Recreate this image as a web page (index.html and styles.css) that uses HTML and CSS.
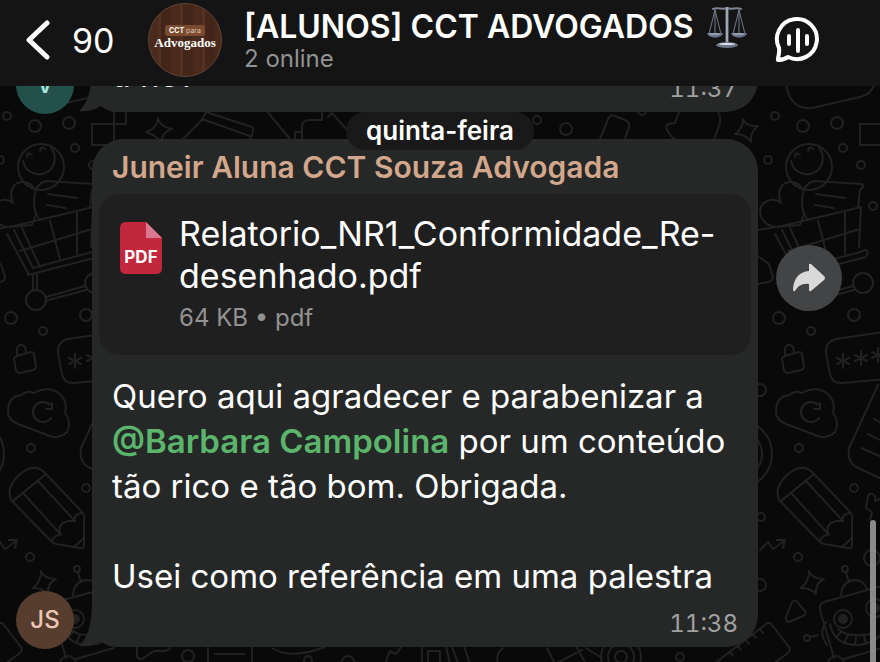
FILE: index.html
```html
<!DOCTYPE html>
<html lang="pt-BR">
<head>
    <meta charset="utf-8">
    <meta name="viewport" content="width=device-width, initial-scale=1">
    <title>[ALUNOS] CCT ADVOGADOS</title>
    <link rel="stylesheet" href="styles.css">
</head>
<body>
    <header class="topbar">
        <a class="back" href="#">
            <svg width="24" height="40" viewBox="0 0 24 40" aria-hidden="true"><path d="M21 3 L3 20 L21 37" fill="none" stroke="#fff" stroke-width="5" stroke-linecap="round" stroke-linejoin="round"/></svg>
            <span>90</span>
        </a>
        <div class="group-photo">
            <span class="photo-tag"><b>CCT</b> para</span>
            <span class="photo-name">Advogados</span>
        </div>
        <div class="group-info">
            <h1>
                <span>[ALUNOS] CCT ADVOGADOS</span>
                <svg width="42" height="42" viewBox="0 0 42 42" aria-hidden="true">
                    <path d="M9 4 L3 28 M9 4 V28 M9 4 L15 28 M33 4 L27 28 M33 4 V28 M33 4 L39 28" fill="none" stroke="#737b8b"/>
                    <path d="M7 3 C12 1 16 4 21 2 C26 4 30 1 35 3" fill="none" stroke="#7d8494" stroke-width="2" stroke-linecap="round"/>
                    <path d="M21 1 V38" stroke="#7d8596" stroke-width="3"/>
                    <path d="M21 1 V38" stroke="#c3c8d4"/>
                    <path d="M1 27 H17 C16 33 2 33 1 27 Z M25 27 H41 C40 33 26 33 25 27 Z" fill="#69738a"/>
                    <path d="M4 28 H13 M28 28 H37" stroke="#c3c8d4" stroke-linecap="round"/>
                    <ellipse cx="21" cy="39" rx="11" ry="3" fill="#6d7789"/>
                    <ellipse cx="21" cy="38" rx="8" ry="1" fill="#dfe3ea"/>
                </svg>
            </h1>
            <p>2 online</p>
        </div>
        <button class="voice" type="button" aria-label="Chat de voz">
            <svg width="46" height="46" viewBox="0 0 46 46" fill="none" stroke="#fff" stroke-width="4" stroke-linecap="round" stroke-linejoin="round"><path d="M5 31 A20 20 0 1 1 14 40 C11 42 8 43 4 43 C3 42 6 38 5 31 Z"/><path d="M15 19 V27 M24 13 V34 M33 19 V27"/></svg>
        </button>
    </header>

    <main class="chat">
        <svg class="wallpaper" viewBox="0 86 880 576" preserveAspectRatio="xMinYMin slice" aria-hidden="true">
            <defs>
                <g id="doodles">
                    <!-- smiley -->
                    <circle cx="41" cy="167" r="23"/>
                    <path d="M23 161 A16 16 0 1 0 51 148 M27 157 Q27 151 32 155 M40 151 Q41 145 45 149"/>
                    <!-- boxes and balloon -->
                    <path d="M92 124 H114 V145 H92 Z M114 112 V124 H126 V112"/>
                    <path d="M18 84 Q22 110 44 108 L92 97 Q104 94 106 84"/>
                    <!-- heart and note -->
                    <path d="M13 203 C6 197 -7 200 -8 211 C-7 222 0 226 8 227 L32 225 L36 214 M13 203 C8 190 14 182 23 182 C30 182 34 187 35 190"/>
                    <path d="M39 219 Q34 212 34 202 Q34 184 46 181 L94 184 Q97 186 92 190 L90 208 M48 194 L77 198 M47 205 L66 208"/>
                    <!-- shopping cart -->
                    <path d="M-10 230 L14 226 L93 207 L91 247 M7 234 L28 273 M14 230 L33 268 L92 252 M28 275 L98 257 Q102 251 97 250 L92 252"/>
                    <path d="M22 228 L40 267 M50 221 L60 259 M77 212 V254 M20 251 L92 229 M33 275 V290 M37 274 V290 M46 297 L85 286 M45 301 L86 290"/>
                    <circle cx="36" cy="300" r="10"/><circle cx="95" cy="283" r="10"/>
                    <path d="M-10 256 L-2 262 Q1 263 2 267 L5 277 Q5 281 0 282 L-10 284"/>
                    <!-- padlock -->
                    <path d="M17 356 L31 352 Q34 352 34 355 L36 366 Q36 369 33 370 L20 373 Q17 373 16 370 L14 359 Q14 357 17 356 Z M17 355 V349 Q18 344 22 345 Q26 346 26 353"/>
                    <!-- password box -->
                    <path d="M116 332 L68 339 Q57 342 58 353 L62 374 Q64 384 75 383 L116 379"/>
                    <path d="M75 354 V368 M69 358 L81 364 M69 364 L81 358 M93 351 V365 M87 355 L99 361 M87 361 L99 355 M110 348 V362 M104 352 L116 358 M104 358 L116 352"/>
                    <!-- cloud -->
                    <path d="M8 412 Q8 396 22 395 Q26 390 34 393 Q48 385 60 394 Q68 402 65 413 Q72 422 67 432 Q60 439 50 436 L18 424 Q8 420 8 412 Z M51 418 A10 10 0 1 1 50 405 M52 403 V409 H46"/>
                    <!-- document -->
                    <path d="M110 385 L81 448 Q79 462 88 467 L114 479 M106 419 L114 423 M100 434 L114 441 M93 448 L114 457"/>
                    <circle cx="-30" cy="454" r="34"/><circle cx="-30" cy="454" r="24"/>
                    <!-- pencil -->
                    <path d="M12 501 Q5 490 17 477 Q33 461 45 473 L83 513 Q85 516 84 520 V545 Q84 549 80 548 L56 544 Q53 543 51 541 Z M13 501 L46 474 M24 494 L61 535 M38 481 L75 521 M51 541 Q58 533 61 535 Q56 524 68 521 Q73 521 75 521 Q73 514 83 513 M74 547 L84 538"/>
                    <path d="M98 508 L100 496 Q103 491 107 496 V501 L114 498 M98 508 L104 512 L102 520 M-8 550 L0 542 L5 549 L16 541 M9 540 H17 L15 548"/>
                    <!-- star and play -->
                    <path d="M41 571 Q44 579 56 579 Q47 583 48 594 Q43 588 33 588 Q41 582 41 571 Z M24 602 Q26 599 30 603 L37 611 Q39 614 35 616 L21 622 Q17 621 18 617 Z"/>
                    <!-- robot -->
                    <path d="M114 586 L56 602 Q51 604 52 610 L66 658 M76 659 L114 648 M78 573 L81 582 M73 597 Q73 582 86 580 Q96 580 99 589 M58 622 Q50 632 59 645 M43 637 L50 635"/>
                    <path d="M62 624 Q66 645 90 645 Q106 643 116 632 M70 629 Q80 638 102 634 M68 637 L74 631 M76 643 L80 635 M87 645 L88 637 M98 644 L96 636"/>
                    <circle cx="75" cy="619" r="9"/><circle cx="75" cy="619" r="4" class="solid"/><circle cx="107" cy="608" r="9"/><circle cx="107" cy="608" r="4" class="solid"/>
                    <circle cx="77" cy="569" r="3"/><circle cx="39" cy="638" r="3"/><circle cx="68" cy="664" r="8"/><circle cx="104" cy="558" r="8"/>
                    <!-- ruler -->
                    <path d="M-54 664 L-2 624 Q1 621 4 625 L21 647 Q23 650 20 653 L5 664 M-8 629 L-5 633 M-15 634 L-12 638 M-22 640 L-19 644 M-30 646 L-27 650 M-38 652 L-35 656"/>
                    <!-- bubbles -->
                    <circle cx="7" cy="116" r="4"/><circle cx="35" cy="126" r="6"/><circle cx="69" cy="123" r="6"/><circle cx="75" cy="148" r="4"/><circle cx="0" cy="160" r="4"/><circle cx="93" cy="165" r="4"/><circle cx="105" cy="206" r="4"/>
                    <circle cx="11" cy="318" r="6"/><circle cx="43" cy="331" r="4"/><circle cx="86" cy="315" r="6"/><circle cx="31" cy="448" r="4"/><circle cx="86" cy="488" r="4"/><circle cx="30" cy="557" r="4"/><circle cx="-8" cy="585" r="6"/><circle cx="-8" cy="390" r="6"/><circle cx="-7" cy="517" r="4"/>
                </g>
            </defs>
            <use href="#doodles"/>
            <use href="#doodles" x="768"/>
            <path d="M158 118 Q160 127 172 129 Q162 132 161 143 Q157 135 146 132 Q157 129 158 118 Z M743 119 Q746 127 758 126 Q750 132 751 142 Q746 134 735 134 Q743 129 743 119 Z"/>
            <path d="M183 139 L202 120 L206 112 L252 127 Q255 129 250 139 M202 119 L250 136 M266 110 L290 139 M295 139 V132 H300 M302 139 V126 Q303 120 310 120 H322 V112 M328 117 L332 113 L347 130"/>
            <path d="M600 139 L609 117 Q611 114 615 116 L627 121 Q630 124 629 127 L625 139 M674 139 Q663 128 668 124 L675 123 L679 112 M718 112 Q722 117 719 126 L714 139"/>
            <circle cx="537" cy="120" r="4"/><circle cx="566" cy="129" r="6"/><circle cx="642" cy="111" r="4"/>
            <path d="M137 646 V656 Q138 660 142 659 L154 651 H165 Q170 650 171 646 M208 646 V664 M252 646 V664 M215 654 H245 M272 648 Q290 660 325 647 M385 664 L390 651 L396 654 L402 646"/>
            <path d="M422 646 V664 M428 664 V651 H440 V664 M446 646 L450 664 M452 646 L458 664 M464 646 L470 664 M498 664 Q495 654 503 648 M547 648 L555 664 L582 650 M576 646 L586 664 M586 648 L602 658"/>
            <circle cx="188" cy="656" r="6"/><circle cx="308" cy="660" r="4"/><circle cx="348" cy="662" r="6"/><circle cx="621" cy="657" r="20"/><circle cx="621" cy="657" r="13"/><circle cx="621" cy="657" r="6"/><circle cx="680" cy="657" r="4"/>
        </svg>

        <article class="row">
            <div class="avatar teal">V</div>
            <div class="bubble short">
                <svg class="tail" width="60" height="47" viewBox="0 0 60 47" aria-hidden="true"><path d="M13 0 C13 24 9 38 0 46 C8 47 16 45 22 41 Q27 46 36 47 H60 V0 Z"/></svg>
                <p class="text">ti né?</p>
                <time>11:37</time>
            </div>
            <div class="share-space"></div>
        </article>

        <article class="row">
            <div class="avatar brown">JS</div>
            <div class="bubble">
                <svg class="tail" width="60" height="47" viewBox="0 0 60 47" aria-hidden="true"><path d="M13 0 C13 24 9 38 0 46 C8 47 16 45 22 41 Q27 46 36 47 H60 V0 Z"/></svg>
                <h2>Juneir Aluna CCT Souza Advogada</h2>
                <a class="file" href="#">
                    <svg width="44" height="54" viewBox="0 0 44 54" aria-hidden="true">
                        <path d="M7 1 H27 L43 17 V47 Q43 53 37 53 H7 Q1 53 1 47 V7 Q1 1 7 1 Z" fill="#c3273d"/>
                        <path d="M27 1 L43 17 H27 Z" fill="#d9788f"/>
                        <text x="22" y="42" text-anchor="middle" class="pdf">PDF</text>
                    </svg>
                    <span class="file-info">
                        <span class="file-name">Relatorio_NR1_Conformidade_Re-<br>desenhado.pdf</span>
                        <span class="file-meta">64 KB • pdf</span>
                    </span>
                </a>
                <p class="text">Quero aqui agradecer e parabenizar a <a class="mention" href="#">@Barbara Campolina</a> por um conteúdo tão rico e tão bom. Obrigada.</p>
                <p class="text">Usei como referência em uma palestra</p>
                <time>11:38</time>
            </div>
            <button class="share" type="button" aria-label="Encaminhar">
                <svg width="34" height="30" viewBox="0 0 34 30" aria-hidden="true"><path d="M17 2 Q17 0 19 1 L32 13 Q34 15 32 17 L19 28 Q17 29 17 27 V21 C10 20 6 23 3 28 Q1 29 1 26 C2 15 7 9 17 8 Z" fill="#d9d9d9"/></svg>
            </button>
        </article>

        <div class="day">quinta-feira</div>
        <div class="scroll-thumb"></div>
    </main>
</body>
</html>
```
FILE: styles.css
```css
* { box-sizing: border-box; margin: 0; padding: 0; }
body { height: 100vh; display: flex; flex-direction: column; background: #090909; color: #fff; font-family: Inter, "Liberation Sans", sans-serif; overflow: hidden; }
a { color: inherit; text-decoration: none; }
button { border: none; background: none; cursor: pointer; }
svg { flex: none; display: block; }

/* header */
.topbar { flex: none; min-height: 86px; display: flex; align-items: center; background: #141414; padding: 0 60px 6px 26px; }
.back { display: flex; align-items: center; gap: 22px; width: 122px; font-size: 34px; }
.group-photo { flex: none; width: 74px; height: 74px; padding-top: 21px; border-radius: 50%; border: 1px solid #5e4336; display: flex; flex-direction: column; align-items: center; background: repeating-linear-gradient(90deg, #4a2a1c 0 9px, #54301f 9px 12px, #432519 12px 22px); }
.photo-tag { padding: 0 4px; border-radius: 3px; background: #7b4b2f; color: #d9c3b0; font-size: 7px; line-height: 11px; }
.photo-tag b { color: #fff; }
.photo-name { font-family: "Liberation Serif", serif; font-size: 13px; line-height: 14px; font-weight: 700; }
.group-info { flex: 1; margin-left: 22px; }
h1 { display: flex; align-items: center; gap: 12px; height: 38px; font-size: 32px; line-height: 38px; font-weight: 600; white-space: nowrap; }
.group-info p { color: #929292; font-size: 24px; line-height: 26px; }

/* messages */
.chat { position: relative; flex: 1; min-height: 0; display: flex; flex-direction: column; justify-content: flex-end; gap: 25px; padding-bottom: 13px; overflow: hidden; }
.wallpaper { position: absolute; top: 0; left: 0; width: 100%; height: 100%; fill: none; stroke: #212121; stroke-width: 2; stroke-linecap: round; stroke-linejoin: round; }
.solid { fill: #212121; }
.row { position: relative; display: flex; align-items: flex-end; gap: 18px; padding: 0 38px 0 16px; }
.avatar { flex: none; width: 58px; height: 58px; border-radius: 50%; font-size: 24px; font-weight: 500; line-height: 58px; text-align: center; }
.teal { background: #23504b; color: #a5e6da; }
.brown { background: #573d2e; color: #eac8b6; }
.bubble { position: relative; flex: 1; margin-bottom: 2px; padding: 10px 7px 8px; border-radius: 32px; background: #252827; }
.tail { position: absolute; left: -13px; bottom: 0; fill: #252827; }
h2 { position: relative; padding: 0 13px; margin-bottom: 9px; font-size: 30px; line-height: 36px; font-weight: 600; color: #d2a78c; }
.file { position: relative; display: flex; gap: 16px; padding: 19px 20px 22px; margin-bottom: 19px; border-radius: 20px; background: #1f1f1f; }
.file svg { margin-top: 8px; }
.file-name { display: block; font-size: 34px; line-height: 42px; white-space: nowrap; }
.file-meta { display: block; margin-top: 6px; font-size: 24px; line-height: 30px; color: #929292; }
.pdf { font-size: 17px; font-weight: 700; fill: #fff; }
.text { position: relative; padding: 0 13px; font-size: 33px; line-height: 45px; }
.text + .text { margin-top: 45px; }
.mention { color: #5bb56c; font-weight: 600; }
time { position: relative; display: block; margin-top: 10px; padding: 0 13px; font-size: 24px; line-height: 30px; text-align: right; font-variant-numeric: tabular-nums; color: #a0a0a0; }
.short { display: flex; justify-content: space-between; align-items: flex-end; }
.short .text { margin-bottom: 6px; }
.share, .share-space { flex: none; width: 66px; }
.share { height: 66px; align-self: flex-start; margin-top: 106px; border-radius: 50%; background: #434445; display: flex; align-items: center; justify-content: center; }

/* over the messages */
.day { position: absolute; top: 26px; left: 50%; transform: translateX(-50%); padding: 0 20px; border-radius: 19px; background: #191919; font-size: 26px; line-height: 38px; font-weight: 600; }
.scroll-thumb { position: absolute; right: 4px; bottom: -20px; width: 6px; height: 162px; border-radius: 3px; background: rgba(160, 160, 160, .85); }
```
